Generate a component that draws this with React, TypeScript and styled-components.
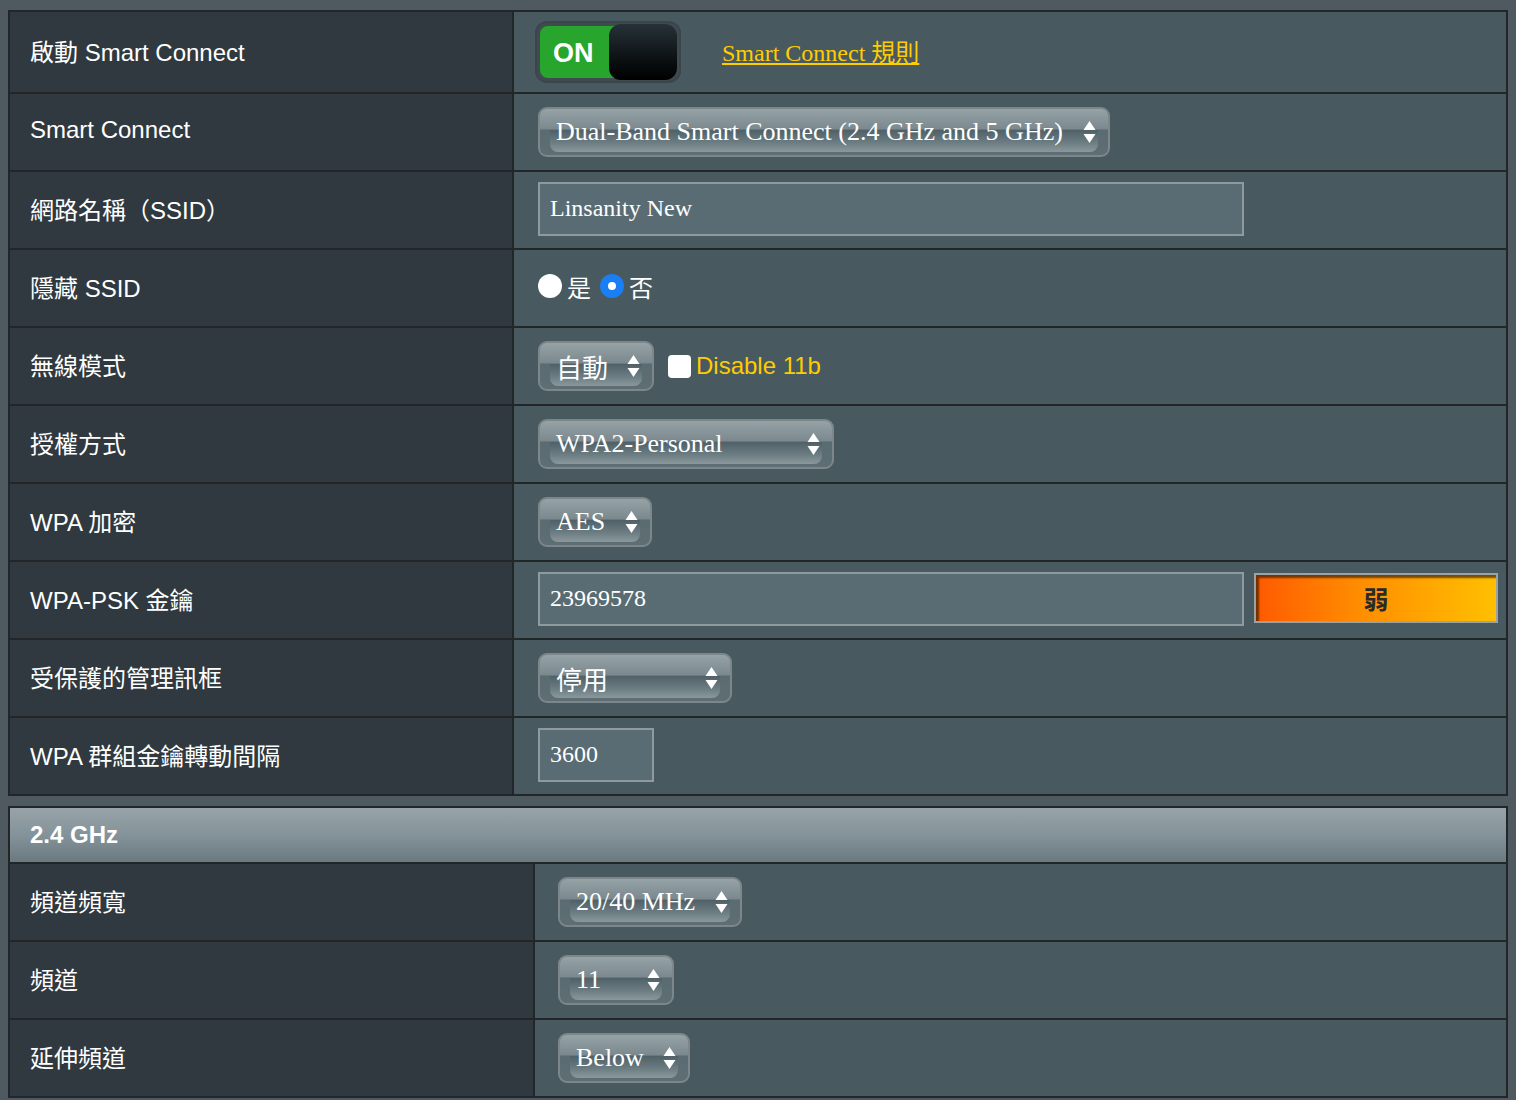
import styled, { createGlobalStyle } from "styled-components";

const GlobalStyle = createGlobalStyle`
  html, body {
    margin: 0;
    padding: 0;
    background: #4e5a5f;
  }
  body {
    font-family: "Liberation Sans", Arial, "Noto Sans CJK TC", sans-serif;
  }
`;

const Page = styled.div`
  padding: 10px 8px 0 8px;
  display: flex;
  flex-direction: column;
  gap: 10px;
`;

const Panel = styled.div`
  border: 2px solid #222629;
  background: #222629;
  display: flex;
  flex-direction: column;
  gap: 2px;
`;

const Row = styled.div<{ $labelW: number; $h?: number }>`
  display: grid;
  grid-template-columns: ${({ $labelW }) => $labelW}px 1fr;
  column-gap: 2px;
  height: ${({ $h }) => $h ?? 76}px;
`;

const Label = styled.div`
  background: #2f393f;
  color: #ffffff;
  font-size: 24px;
  display: flex;
  align-items: center;
  padding: 0 0 4px 20px;
`;

const Value = styled.div<{ $pad?: number }>`
  background: #485a60;
  display: flex;
  align-items: center;
  gap: 14px;
  padding-left: ${({ $pad }) => $pad ?? 24}px;
  padding-right: 8px;
  color: #ffffff;
`;

const Header = styled.div`
  height: 54px;
  background: linear-gradient(180deg, #97a3a8 0%, #84939a 50%, #6b7a80 100%);
  color: #ffffff;
  font-weight: bold;
  font-size: 24px;
  display: flex;
  align-items: center;
  padding-left: 20px;
`;

const Toggle = styled.div`
  width: 146px;
  height: 62px;
  box-sizing: border-box;
  border: 2px solid #3b464b;
  border-radius: 12px;
  background: #3f4b50;
  display: flex;
  align-items: center;
  padding: 0 2px 0 3px;
  margin-left: -3px;
`;

const ToggleOn = styled.div`
  width: 82px;
  height: 52px;
  background: #27a52c;
  border-radius: 8px 0 0 8px;
  color: #ffffff;
  font-weight: bold;
  font-size: 27px;
  display: flex;
  align-items: center;
  padding: 3px 0 0 13px;
  box-sizing: border-box;
`;

const Knob = styled.div`
  width: 70px;
  height: 56px;
  margin-left: -12px;
  border-radius: 12px;
  background: linear-gradient(180deg, #263238 0%, #0d1214 60%, #000000 100%);
`;

const RuleLink = styled.a`
  color: #ffcc00;
  font-family: "Liberation Serif", "Times New Roman", "Noto Sans CJK TC", serif;
  font-size: 24px;
  text-decoration: underline;
  margin: 0 0 4px 27px;
`;

const SelectBox = styled.div<{ $w: number }>`
  position: relative;
  width: ${({ $w }) => $w}px;
  height: 50px;
  box-sizing: border-box;
  border: 2px solid #7d8689;
  border-radius: 9px;
  background: linear-gradient(180deg, #95a2a6 0%, #7b898e 44%, #5a6b71 45%, #5d6e74 100%);
  display: flex;
  align-items: center;
  justify-content: space-between;
  padding: 0 12px 0 16px;
  overflow: hidden;

  &::before {
    content: "";
    position: absolute;
    left: 10px;
    right: 10px;
    top: 45%;
    bottom: 3px;
    border-radius: 0 0 8px 8px;
    background: linear-gradient(180deg, #4f6167 0%, #6a7b81 55%, #8a989c 100%);
  }
`;

const SelectText = styled.span`
  position: relative;
  color: #ffffff;
  font-family: "Liberation Serif", "Times New Roman", "Noto Sans CJK TC", serif;
  font-size: 26px;
  white-space: nowrap;
`;

const ArrowIcon = styled.svg`
  position: relative;
  flex-shrink: 0;
`;

const TextInput = styled.div<{ $w: number }>`
  width: ${({ $w }) => $w}px;
  height: 54px;
  box-sizing: border-box;
  border: 2px solid #8e9a9e;
  background: #5a6c73;
  color: #ffffff;
  font-family: "Liberation Serif", "Times New Roman", serif;
  font-size: 24px;
  display: flex;
  align-items: center;
  padding-left: 10px;
  margin-top: -3px;
`;

const RadioGroup = styled.div`
  display: flex;
  align-items: center;
  gap: 2px;
  font-family: "Liberation Serif", "Noto Sans CJK TC", serif;
  font-size: 24px;
  color: #ffffff;
  margin-bottom: 4px;
`;

const Radio = styled.span<{ $on?: boolean }>`
  width: 24px;
  height: 24px;
  border-radius: 50%;
  box-sizing: border-box;
  background: ${({ $on }) => ($on ? "#1a7ef5" : "#ffffff")};
  display: inline-flex;
  align-items: center;
  justify-content: center;
  margin-right: 3px;
  margin-left: ${({ $on }) => ($on ? "7px" : "0")};
  &::after {
    content: "";
    width: 8px;
    height: 8px;
    border-radius: 50%;
    background: #ffffff;
    display: ${({ $on }) => ($on ? "block" : "none")};
  }
`;

const CheckLabel = styled.label`
  display: flex;
  align-items: center;
  gap: 5px;
  color: #ffcc00;
  font-size: 24px;
`;

const CheckBox = styled.span`
  width: 23px;
  height: 23px;
  border-radius: 4px;
  background: #ffffff;
  display: inline-block;
`;

const Strength = styled.div`
  width: 244px;
  height: 50px;
  box-sizing: border-box;
  border: 2px solid #9ba2a4;
  background: linear-gradient(90deg, #ff5a00 0%, #ff8a00 40%, #ffc000 100%);
  box-shadow: inset 3px 3px 2px rgba(60, 30, 0, 0.7);
  display: flex;
  align-items: center;
  justify-content: center;
  font-size: 25px;
  font-weight: bold;
  color: #2a2a2a;
  margin: -4px 0 0 -4px;
`;

function Arrows() {
  return (
    <ArrowIcon width="13" height="24" viewBox="0 0 13 24">
      <polygon points="6.5,1 12.5,10 0.5,10" fill="#ffffff" />
      <polygon points="0.5,14 12.5,14 6.5,23" fill="#ffffff" />
    </ArrowIcon>
  );
}

function Select({ w, text }: { w: number; text: string }) {
  return (
    <SelectBox $w={w}>
      <SelectText>{text}</SelectText>
      <Arrows />
    </SelectBox>
  );
}

const L1 = 502;
const L2 = 523;

export default function App() {
  return (
    <>
      <GlobalStyle />
      <Page>
        <Panel>
          <Row $labelW={L1} $h={80}>
            <Label>啟動 Smart Connect</Label>
            <Value>
              <Toggle>
                <ToggleOn>ON</ToggleOn>
                <Knob />
              </Toggle>
              <RuleLink>Smart Connect 規則</RuleLink>
            </Value>
          </Row>
          <Row $labelW={L1}>
            <Label>Smart Connect</Label>
            <Value>
              <Select w={572} text="Dual-Band Smart Connect (2.4 GHz and 5 GHz)" />
            </Value>
          </Row>
          <Row $labelW={L1}>
            <Label>網路名稱（SSID）</Label>
            <Value>
              <TextInput $w={706}>Linsanity New</TextInput>
            </Value>
          </Row>
          <Row $labelW={L1}>
            <Label>隱藏 SSID</Label>
            <Value>
              <RadioGroup>
                <Radio />是<Radio $on />否
              </RadioGroup>
            </Value>
          </Row>
          <Row $labelW={L1}>
            <Label>無線模式</Label>
            <Value>
              <Select w={116} text="自動" />
              <CheckLabel>
                <CheckBox />
                Disable 11b
              </CheckLabel>
            </Value>
          </Row>
          <Row $labelW={L1}>
            <Label>授權方式</Label>
            <Value>
              <Select w={296} text="WPA2-Personal" />
            </Value>
          </Row>
          <Row $labelW={L1}>
            <Label>WPA 加密</Label>
            <Value>
              <Select w={114} text="AES" />
            </Value>
          </Row>
          <Row $labelW={L1}>
            <Label>WPA-PSK 金鑰</Label>
            <Value>
              <TextInput $w={706}>23969578</TextInput>
              <Strength>弱</Strength>
            </Value>
          </Row>
          <Row $labelW={L1}>
            <Label>受保護的管理訊框</Label>
            <Value>
              <Select w={194} text="停用" />
            </Value>
          </Row>
          <Row $labelW={L1}>
            <Label>WPA 群組金鑰轉動間隔</Label>
            <Value>
              <TextInput $w={116}>3600</TextInput>
            </Value>
          </Row>
        </Panel>
        <Panel>
          <Header>2.4 GHz</Header>
          <Row $labelW={L2}>
            <Label>頻道頻寬</Label>
            <Value $pad={23}>
              <Select w={184} text="20/40 MHz" />
            </Value>
          </Row>
          <Row $labelW={L2}>
            <Label>頻道</Label>
            <Value $pad={23}>
              <Select w={116} text="11" />
            </Value>
          </Row>
          <Row $labelW={L2}>
            <Label>延伸頻道</Label>
            <Value $pad={23}>
              <Select w={132} text="Below" />
            </Value>
          </Row>
        </Panel>
      </Page>
    </>
  );
}
